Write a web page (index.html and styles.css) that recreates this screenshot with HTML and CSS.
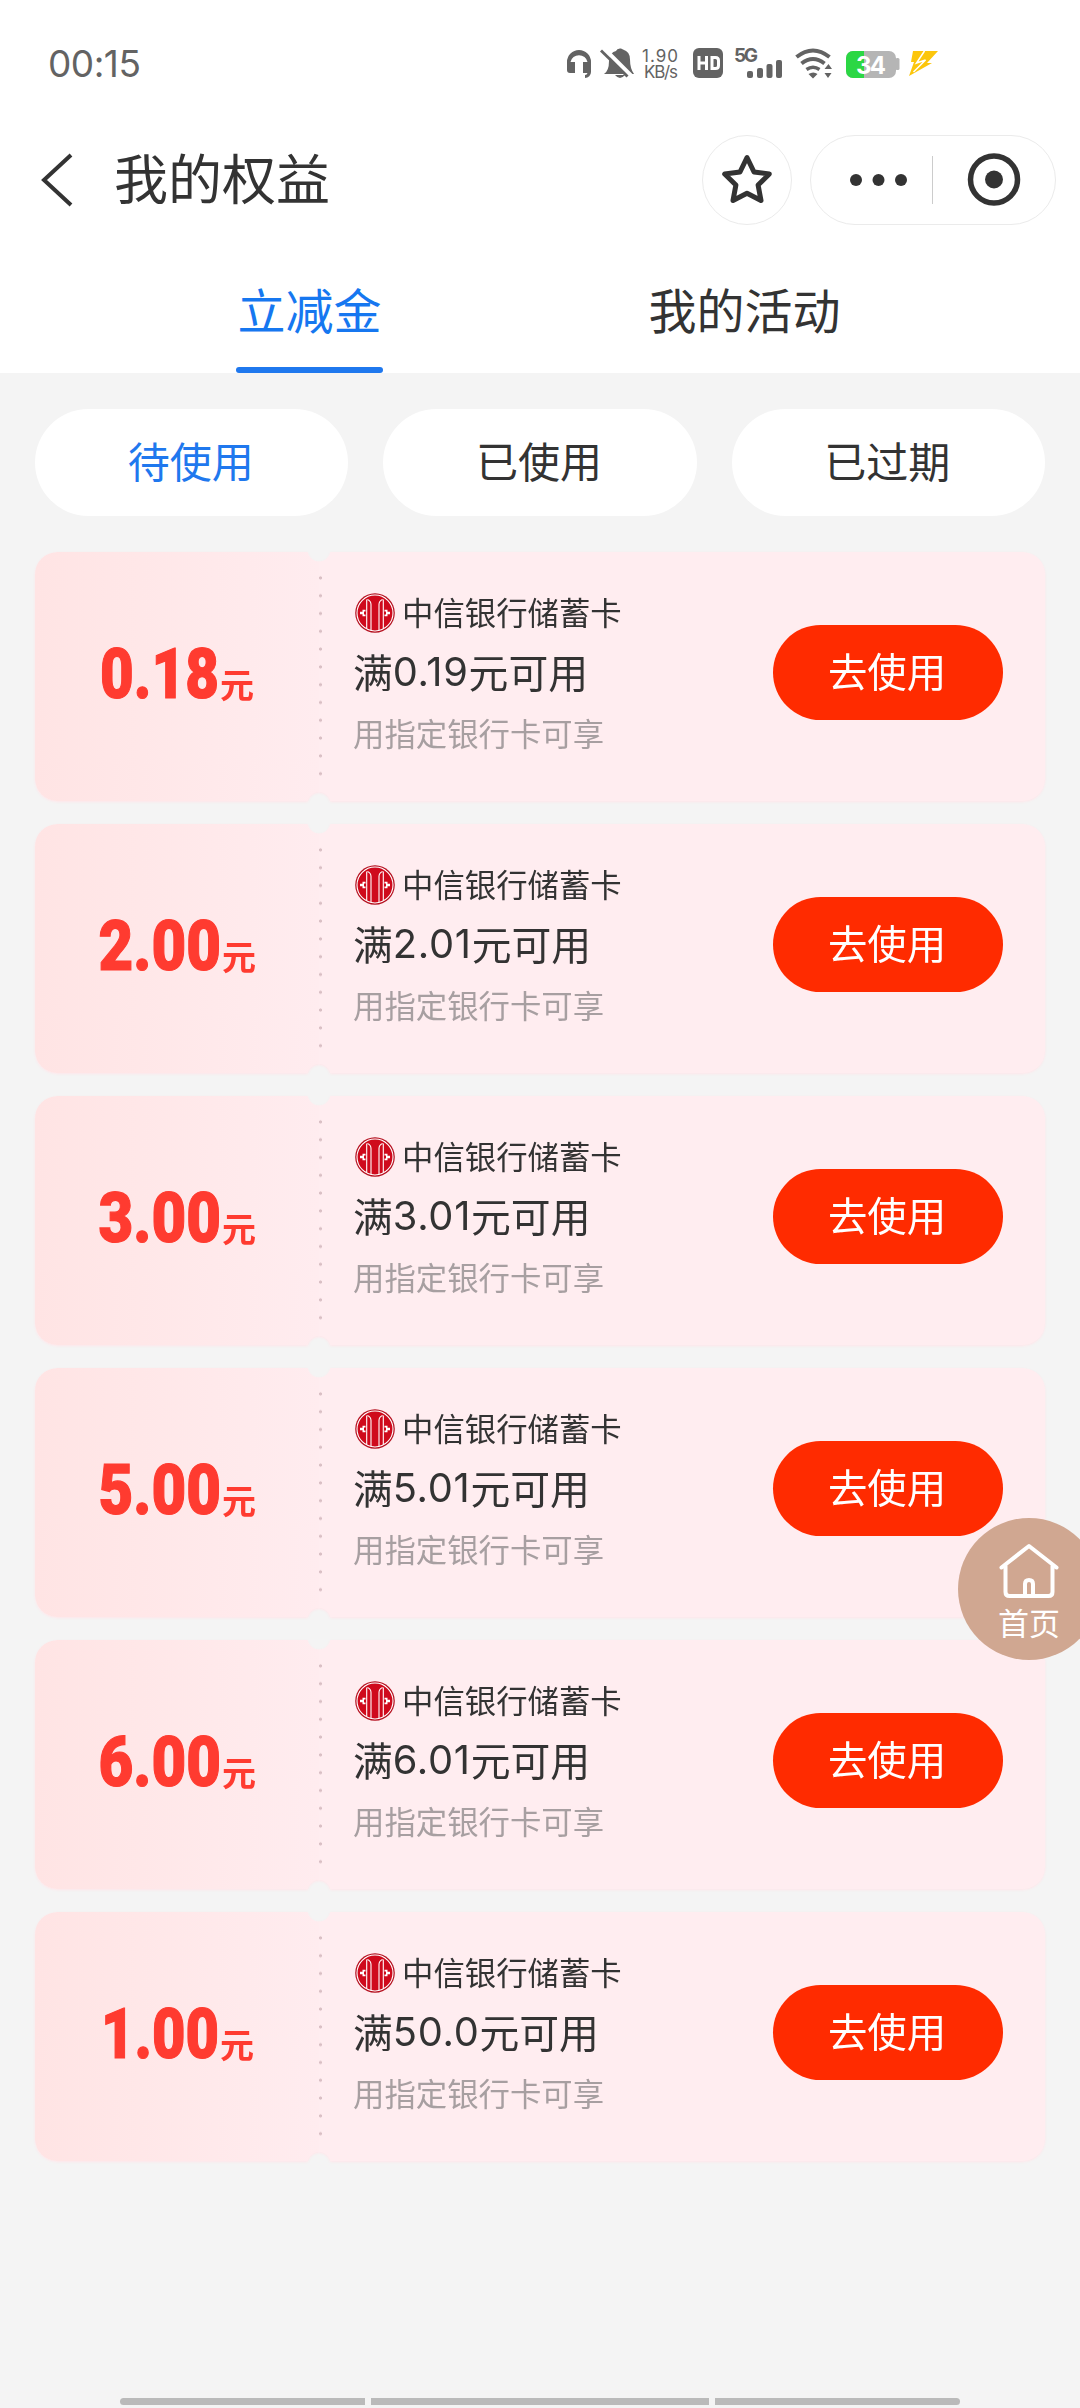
FILE: index.html
```html
<!DOCTYPE html>
<html lang="zh-CN">
<head>
<meta charset="utf-8">
<title>我的权益</title>
<link rel="stylesheet" href="styles.css">
</head>
<body>
<svg width="0" height="0" class="defs">
  <symbol id="bank" viewBox="0 0 40 40">
    <circle cx="20" cy="20" r="19.800" fill="#b5101f"/>
    <circle cx="20" cy="20" r="18" fill="#cf0a1c" stroke="#fff" stroke-width="1.100"/>
    <path d="M11.700 35.500V6.500M28.300 35.500V6.500M16 37.500V11.500q0-3.500-3.500-5M24 37.500V11.500q0-3.500 3.500-5" fill="none" stroke="#fff" stroke-width="1.100"/>
    <path d="M10.500 16.800H7.500v2H5v2.400h2.500v2h3v-1.800H9v-2.800h1.500zM29.500 16.800h3v2H35v2.400h-2.500v2h-3v-1.800H31v-2.800h-1.500z" fill="#fff"/>
  </symbol>
</svg>
<header class="top">
  <div class="status">
    <span class="clock">00:15</span>
    <svg class="status-icons" width="384" height="40" viewBox="0 0 384 40">
      <g fill="#636363">
        <path d="M3 30V20a12 12 0 0 1 24 0v10a6 6 0 0 1-6 6v-3q2 0 2.500-2H19V20h4.500a8.700 8.700 0 0 0-17 0H11v11H6q-3 0-3-3z"/>
        <path d="M40 32q5-3 5-13 1-9 7-10 1-3 5-2.500l2 1q7 2 7 10 0 9 4 14.500H40zM51 33h10q-5 6-10 0z"/>
        <path d="M41 7.500l26 26" stroke="#fff" stroke-width="4"/>
        <path d="M37 8.500l26.500 26" stroke="#636363" stroke-width="2.800"/>
        <text class="net" x="78" y="20" textLength="36">1.90</text>
        <text class="net" x="80" y="35.500" textLength="34">KB/s</text>
        <rect x="129" y="6" width="30" height="30" rx="6"/>
        <path d="M135 14v14M142.500 14v14M135 21h7.500M148 15.500v11h3.500q3 0 3-3v-5q0-3-3-3z" stroke="#fff" stroke-width="3" fill="none"/>
        <text class="five" x="170" y="20" textLength="24">5G</text>
        <rect x="183" y="29" width="6" height="7" rx="2"/><rect x="193" y="26" width="6" height="10" rx="2"/><rect x="202.500" y="22" width="6" height="14" rx="2"/><rect x="212" y="18" width="6" height="18" rx="2"/>
        <path d="M232.500 15q16.500-13 33 0M237.500 21.500q11.500-9 23 0" stroke="#636363" stroke-width="4" fill="none"/>
        <path d="M242.500 27.500q6.500-4.500 13 0" stroke="#636363" stroke-width="3.500" fill="none"/>
        <path d="M244.500 32q5-3 9 0l-4.500 4.500zM260.500 27l4-5 3.500 5zM260.500 31h7l-3.500 5z"/>
      </g>
      <rect x="282" y="9" width="50" height="27" rx="7" fill="#b5b5b5"/>
      <path d="M300 9v27h-11a7 7 0 0 1-7-7V16a7 7 0 0 1 7-7z" fill="#2bd744"/>
      <rect x="331.500" y="16" width="4" height="12" rx="1.500" fill="#b5b5b5"/>
      <text class="level" x="292" y="32" textLength="30">34</text>
      <path d="M349 9h25L363 21h5L345 34l5-14h-3z" fill="#fcc60c"/>
      <path d="M360.500 9l-8 12 9-3-12 12" fill="none" stroke="#fff" stroke-width="1.500"/>
    </svg>
  </div>
  <div class="nav">
    <svg class="back" width="32" height="54" viewBox="0 0 32 54"><path d="M30 2L3 27l27 25" fill="none" stroke="#333" stroke-width="4"/></svg>
    <h1>我的权益</h1>
    <div class="round">
      <svg width="50" height="52" viewBox="0 0 50 52"><path d="M25 3.500l7 14.500 15.300 2-11.200 11 2.900 15.500-14-7.300-14 7.300 2.900-15.500L2.700 20 18 18z" fill="none" stroke="#333" stroke-width="5" stroke-linejoin="round"/></svg>
    </div>
    <div class="capsule">
      <svg width="244" height="88" viewBox="0 0 244 88"><g fill="#333"><circle cx="45" cy="44" r="6"/><circle cx="67.500" cy="44" r="6"/><circle cx="90" cy="44" r="6"/><circle cx="183" cy="43.500" r="9"/></g><path d="M121.500 20v48" stroke="#ccc"/><circle cx="183" cy="43.500" r="23.500" fill="none" stroke="#333" stroke-width="5.500"/></svg>
    </div>
  </div>
  <nav class="tabs"><span class="tab active">立减金</span><span class="tab">我的活动</span></nav>
</header>
<main>
  <div class="filters"><span class="on">待使用</span><span>已使用</span><span>已过期</span></div>
  <section class="list" id="list"></section>
</main>
<aside class="home">
  <svg width="60" height="56" viewBox="0 0 60 56"><path d="M2.500 24.500L30 3l27.500 21.500M6.500 23v26q0 4 4 4h39q4 0 4-4V23M26 53V41q0-4 4-4t4 4v12" fill="none" stroke="#fff" stroke-width="4" stroke-linecap="round" stroke-linejoin="round"/></svg>
  <span>首页</span>
</aside>
<footer class="bars"><i></i><i></i><i></i></footer>
<script src="app.js"></script>
</body>
</html>
```
FILE: styles.css
```css
* { box-sizing: border-box; }
body {
  position: relative;
  margin: 0;
  width: 1080px;
  height: 2408px;
  display: flex;
  flex-direction: column;
  overflow: hidden;
  background: #f4f4f4;
  color: #333;
  font-family: "Noto Sans CJK SC", sans-serif;
}
.defs { position: absolute; }
.top { background: #fff; height: 373px; display: flex; flex-direction: column; }
.status { height: 127px; padding: 30px 0 0 48px; display: flex; align-items: flex-start; }
.clock { width: 516px; font: 37px/67px Inter, sans-serif; color: #636363; letter-spacing: -0.500px; }
.status-icons { margin-top: 12px; }
.net { font: 17px Inter, sans-serif; }
.five { font: 700 19px Inter, sans-serif; }
.level { font: 700 24px Inter, sans-serif; fill: #fff; }
.nav { height: 106px; display: flex; align-items: center; padding-left: 41px; }
h1 { margin: 0 0 0 41px; width: 588px; padding-bottom: 6px; font-size: 54px; line-height: 84px; font-weight: 400; }
.round, .capsule { height: 90px; border: 1px solid #ebebeb; border-radius: 45px; display: flex; align-items: center; justify-content: center; }
.round { width: 90px; margin-right: 18px; }
.capsule { width: 246px; }
.tabs { height: 140px; display: flex; padding: 0 118px 0 92px; }
.tab { flex: 1; text-align: center; font-size: 48px; line-height: 150px; }
.tab.active { color: #1677f0; display: flex; flex-direction: column; align-items: center; }
.tab.active::after { content: ""; width: 147px; height: 6px; border-radius: 3px; background: #1f78ee; margin-top: -16px; }
.filters { display: grid; grid-template-columns: repeat(3, 1fr); gap: 35px; padding: 36px 35px; }
.filters span { height: 107px; border-radius: 54px; background: #fff; text-align: center; font-size: 42px; line-height: 102px; padding-right: 2px; }
.filters .on { color: #1f78ee; }
.list { padding: 0 35px; display: grid; gap: 23px; }
.coupon { height: 249px; display: grid; grid-template-columns: 284px 1fr; filter: drop-shadow(0 1px 1px #ffe6ea); }
.left {
  border-radius: 22px 0 0 22px;
  display: flex;
  align-items: center;
  justify-content: center;
  background: linear-gradient(90deg, #ffe4e4, #ffecef);
  -webkit-mask: radial-gradient(circle 12px at 100% -2px, transparent 11px, #000 12px) 0 0 / 100% 51% no-repeat, radial-gradient(circle 12px at 100% calc(100% + 2px), transparent 11px, #000 12px) 0 100% / 100% 50% no-repeat;
}
.right {
  position: relative;
  border-radius: 0 22px 22px 0;
  display: flex;
  align-items: center;
  justify-content: space-between;
  padding: 0 42px 0 34px;
  background: #ffedf0;
  -webkit-mask: radial-gradient(circle 12px at 0 -2px, transparent 11px, #000 12px) 0 0 / 100% 51% no-repeat, radial-gradient(circle 12px at 0 calc(100% + 2px), transparent 11px, #000 12px) 0 100% / 100% 50% no-repeat;
}
.right::before {
  content: "";
  position: absolute;
  left: 0;
  top: 17px;
  width: 3px;
  height: 213.600px;
  background: radial-gradient(circle at 50% 50%, #d9bfc4 1.200px, transparent 1.900px) 0 0 / 3px 17.800px repeat-y;
}
.amount { display: block; }
.amount .num { font: 900 70px Roboto, sans-serif; stroke: #ff3b30; stroke-width: 1.200px; }
.amount .yuan { font: 700 34px "Noto Sans CJK SC", sans-serif; }
.info { display: flex; flex-direction: column; padding-bottom: 8px; }
.bank { display: flex; align-items: center; gap: 7px; font-size: 31.400px; height: 50px; padding-left: 2px; }
.bank span { padding-bottom: 3px; }
.cond { display: flex; font-size: 39.800px; line-height: 68px; margin-top: -1px; }
.digits { font-family: Inter, sans-serif; letter-spacing: 0.700px; padding-top: 1px; }
.note { font-size: 31.400px; line-height: 50px; margin-top: 2px; color: #a79fa1; }
.use { width: 230px; height: 95px; border-radius: 48px; background: #ff2b00; color: #fff; font-size: 39.400px; line-height: 90px; text-align: center; margin-top: -8px; padding-right: 2px; }
.home {
  position: absolute;
  left: 958px;
  top: 1518px;
  width: 142px;
  height: 142px;
  border-radius: 71px;
  background: #d0a791;
  color: #fff;
  display: flex;
  flex-direction: column;
  align-items: center;
  padding-top: 25px;
  font-size: 31px;
  line-height: 46px;
}
.bars { margin-top: auto; display: grid; grid-template-columns: 245px 338px 245px; gap: 6px; padding: 0 120px 3px; }
.bars i { height: 7px; background: #bababa; }
.bars i:first-child { border-radius: 4px 0 0 4px; }
.bars i:last-child { border-radius: 0 4px 4px 0; }
```
FILE: app.js
```js
// amount, minimum spend, left edge and drawn width of the amount
const coupons = [
  ["0.18", "0.19", 8, 119],
  ["2.00", "2.01", 6.5, 122.5],
  ["3.00", "3.01", 6.5, 122.5],
  ["5.00", "5.01", 6.5, 122.5],
  ["6.00", "6.01", 6.5, 122.5],
  ["1.00", "50.0", 9, 118]
];
const squeeze = 0.86;
document.getElementById("list").innerHTML = coupons.map(([amount, min, x, width]) => `
  <article class="coupon">
    <div class="left">
      <svg class="amount" width="170" height="100" viewBox="0 0 170 100" fill="#ff3b30">
        <text class="num" transform="scale(${squeeze} 1)" x="${x / squeeze}" y="71" textLength="${width / squeeze}" lengthAdjust="spacingAndGlyphs">${amount}</text>
        <text class="yuan" x="${x + width + 1}" y="71">元</text>
      </svg>
    </div>
    <div class="right">
      <div class="info">
        <div class="bank"><svg width="40" height="40"><use href="#bank"/></svg><span>中信银行储蓄卡</span></div>
        <div class="cond">满<span class="digits">${min}</span>元可用</div>
        <div class="note">用指定银行卡可享</div>
      </div>
      <div class="use">去使用</div>
    </div>
  </article>`).join("");
```
